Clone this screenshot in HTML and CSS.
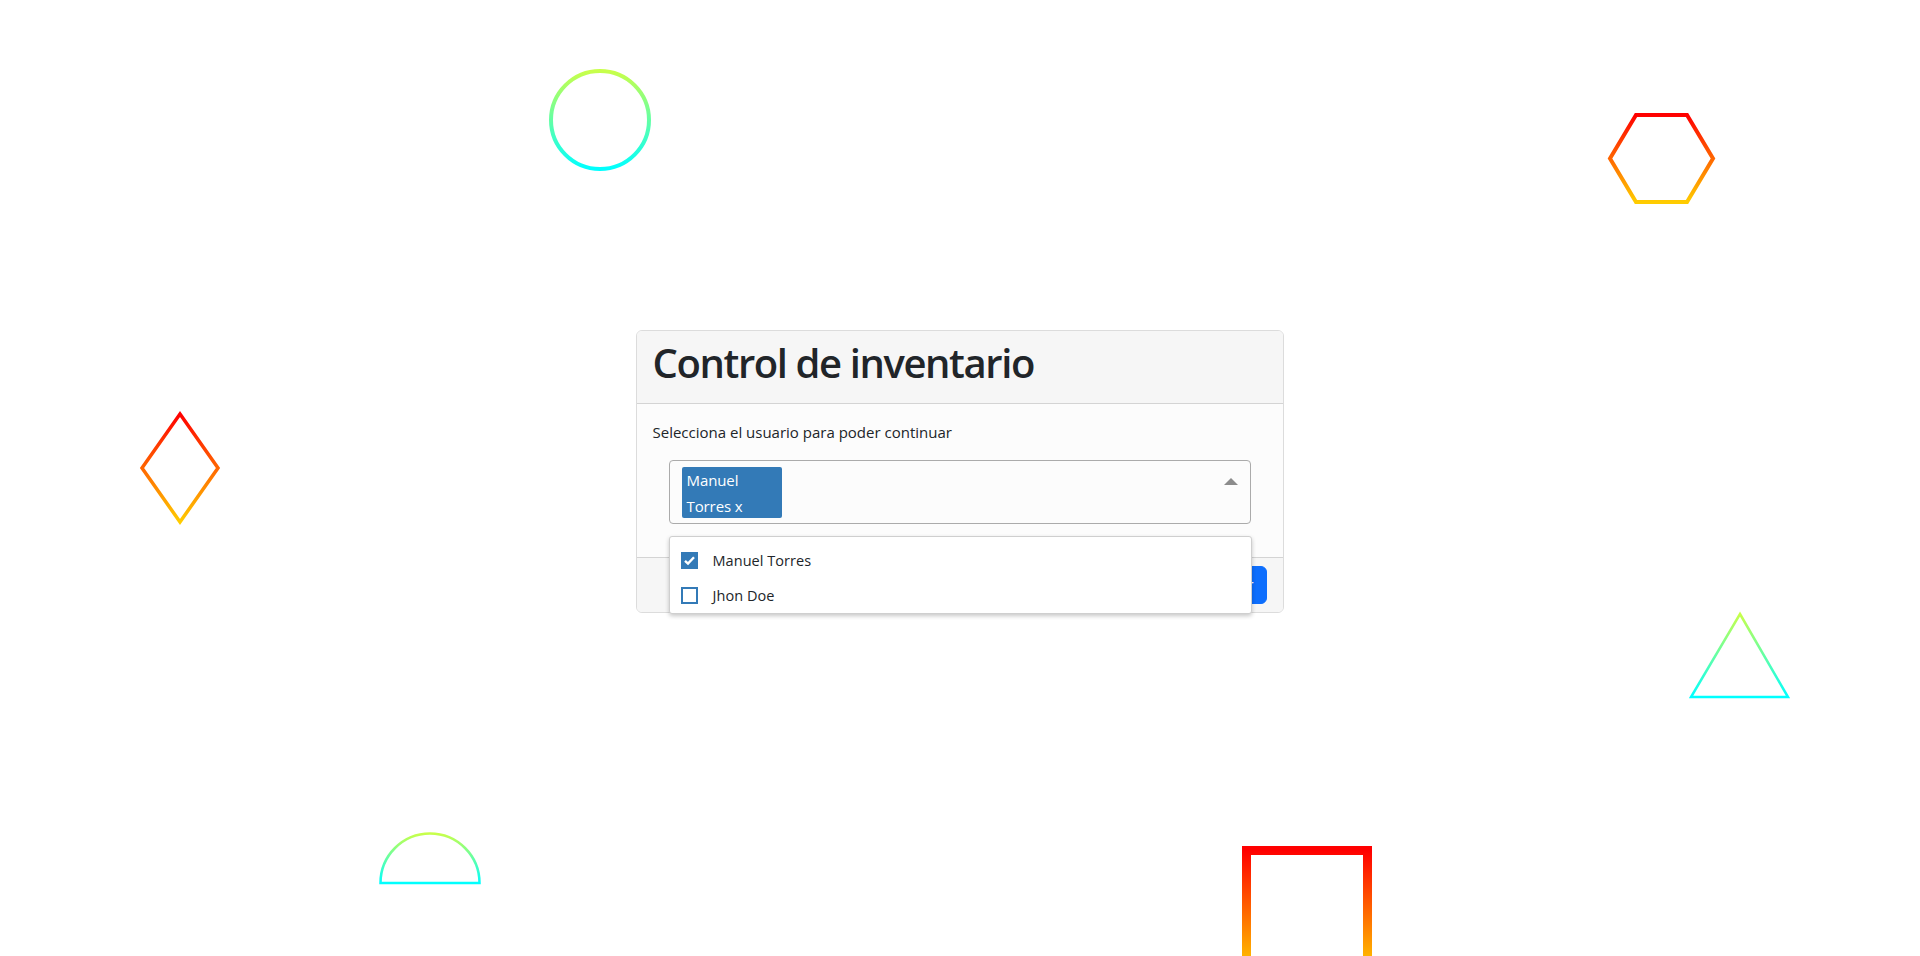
FILE: index.html
```html
<!DOCTYPE html>
<html lang="es">
<head>
<meta charset="utf-8">
<title>Control de inventario</title>
<link rel="stylesheet" href="styles.css">
</head>
<body>
<svg class="shapes" width="1920" height="956" viewBox="0 0 1920 956" xmlns="http://www.w3.org/2000/svg" aria-hidden="true">
  <defs>
    <linearGradient id="gCool" x1="0" y1="0" x2="0" y2="1">
      <stop offset="0" stop-color="#c8ff4a"/>
      <stop offset="1" stop-color="#00ffff"/>
    </linearGradient>
    <linearGradient id="gWarm" x1="0" y1="0" x2="0" y2="1">
      <stop offset="0" stop-color="#ff0000"/>
      <stop offset="1" stop-color="#ffcc00"/>
    </linearGradient>
  </defs>
  <circle cx="600" cy="120" r="49" fill="none" stroke="url(#gCool)" stroke-width="4"/>
  <polygon points="1636,115 1687,115 1713,158.5 1687,202 1636,202 1610,158.5" fill="none" stroke="url(#gWarm)" stroke-width="4"/>
  <polygon points="180,414 218,468 180,522 142,468" fill="none" stroke="url(#gWarm)" stroke-width="3.5"/>
  <polygon points="1740,614 1788,697 1691,697" fill="none" stroke="url(#gCool)" stroke-width="2.5"/>
  <path d="M380.5 883 A49.5 49.5 0 0 1 479.5 883 Z" fill="none" stroke="url(#gCool)" stroke-width="2.5"/>
  <rect x="1246.5" y="850.5" width="121" height="121" fill="none" stroke="url(#gWarm)" stroke-width="9"/>
</svg>

<main class="page">
  <section class="card">
    <header class="card-header">
      <h1 class="card-title">Control de inventario</h1>
    </header>
    <div class="card-body">
      <p class="lead-text">Selecciona el usuario para poder continuar</p>
      <div class="ms">
        <div class="ms-box">
          <span class="ms-tag">Manuel Torres x</span>
          <span class="ms-arrow"></span>
        </div>
        <ul class="ms-menu">
          <li class="ms-item">
            <span class="ms-check is-checked">
              <svg width="17" height="17" viewBox="0 0 17 17"><path d="M4 8.8 L7 11.6 L13 5.2" fill="none" stroke="#fff" stroke-width="2.4"/></svg>
            </span>
            <span class="ms-label">Manuel Torres</span>
          </li>
          <li class="ms-item">
            <span class="ms-check"></span>
            <span class="ms-label">Jhon Doe</span>
          </li>
        </ul>
      </div>
    </div>
    <footer class="card-footer">
      <button class="btn-primary" type="button">Continuar</button>
    </footer>
  </section>
</main>
</body>
</html>
```

FILE: styles.css
```css
* { box-sizing: border-box; }

html, body {
  margin: 0;
  padding: 0;
  background: #ffffff;
}

body {
  font-family: "Open Sans", "Noto Sans", "Liberation Sans", sans-serif;
  color: #212529;
  font-size: 16px;
  line-height: 24px;
  width: 1920px;
  height: 956px;
  overflow: hidden;
  position: relative;
}

.shapes {
  position: absolute;
  left: 0;
  top: 0;
  z-index: 0;
}

.page {
  position: relative;
  z-index: 1;
  display: flex;
  justify-content: center;
  padding-top: 330px;
  padding-right: 1px;
}

.card {
  width: 648px;
  border: 1px solid #dcdcdc;
  border-radius: 6px;
  background: #fcfcfc;
  display: flex;
  flex-direction: column;
}

.card-header {
  background: #f6f6f6;
  border-bottom: 1px solid #d4d4d4;
  border-radius: 5px 5px 0 0;
  padding: 8px 16px;
}

.card-title {
  margin: 0 0 8px 0;
  font-size: 40px;
  line-height: 48px;
  font-weight: 600;
  letter-spacing: -1.4px;
  color: #212529;
}

.card-body {
  padding: 16px;
}

.lead-text {
  margin: 0 0 16px 0;
  font-size: 15px;
  letter-spacing: 0;
}

.ms {
  position: relative;
  margin: 0 16px 17px 16px;
}

.ms-box {
  height: 64px;
  border: 1px solid #ababab;
  border-radius: 4px;
  background: #fcfcfc;
  display: flex;
  justify-content: space-between;
  align-items: flex-start;
  padding: 6px 12px 0 12px;
}

.ms-tag {
  width: 100px;
  height: 51px;
  background: #337ab7;
  color: #ffffff;
  border-radius: 2px;
  padding: 1px 5px 0 5px;
  font-size: 15px;
  line-height: 25.5px;
  letter-spacing: -0.1px;
}

.ms-arrow {
  margin-top: 11px;
  width: 0;
  height: 0;
  border-left: 7px solid transparent;
  border-right: 7px solid transparent;
  border-bottom: 7px solid #8c8c8c;
}

.ms-menu {
  position: absolute;
  left: 0;
  right: -1px;
  top: 76px;
  z-index: 5;
  margin: 0;
  padding: 6px 0 0 0;
  list-style: none;
  background: #ffffff;
  border: 1px solid #cfcfcf;
  border-radius: 3px;
  box-shadow: 0 2px 4px rgba(0, 0, 0, 0.22);
}

.ms-item {
  height: 35px;
  display: flex;
  align-items: center;
  padding-left: 11px;
  gap: 15px;
}

.ms-check {
  width: 17px;
  height: 17px;
  border: 2px solid #337ab7;
  background: #ffffff;
  display: flex;
  align-items: center;
  justify-content: center;
}

.ms-check.is-checked {
  border: none;
  background: #337ab7;
}

.ms-label {
  font-size: 14.5px;
  letter-spacing: 0.05px;
  color: #212529;
}

.card-footer {
  background: #f6f6f6;
  border-top: 1px solid #d4d4d4;
  border-radius: 0 0 5px 5px;
  padding: 8px 16px;
  display: flex;
  justify-content: flex-end;
}

.btn-primary {
  height: 38px;
  padding: 0 12px;
  border: 1px solid #0d6efd;
  border-radius: 6px;
  background: #0d6efd;
  color: #ffffff;
  font-family: inherit;
  font-size: 16px;
}
```
